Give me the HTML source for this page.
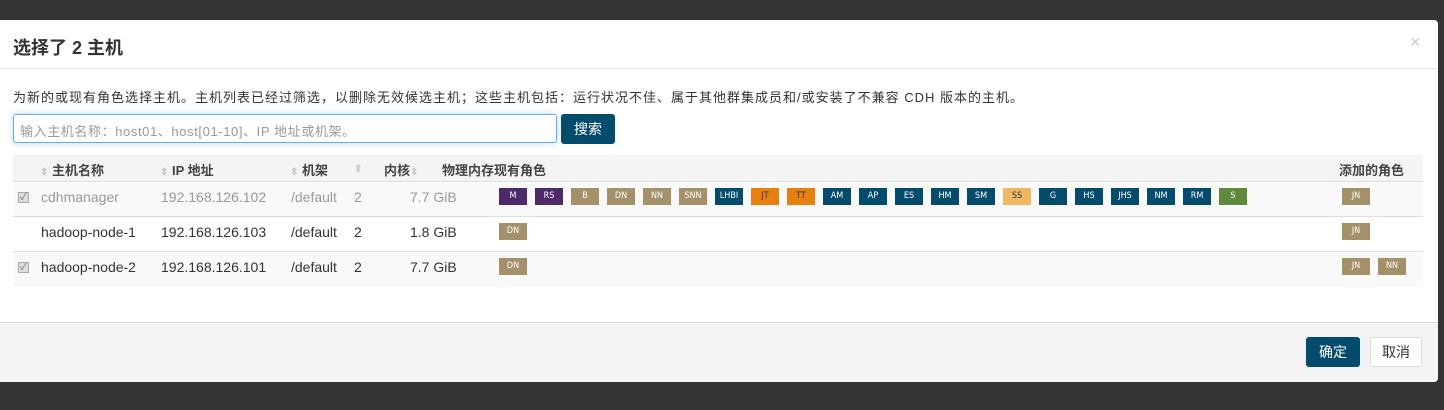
<!DOCTYPE html>
<html><head><meta charset="utf-8"><style>
*{margin:0;padding:0;box-sizing:border-box}
body{width:1444px;height:410px;background:#333;font-family:"Liberation Sans","Noto Sans CJK SC",sans-serif;position:relative;overflow:hidden;color:#333}
.modal{position:absolute;left:0;top:20px;width:1438px;height:362px;background:#fff;border-radius:0 4px 4px 0;overflow:hidden}
.a{position:absolute;white-space:nowrap}
.b{position:absolute;width:28px;height:17px;color:#fff;font-size:9px;line-height:17px;text-align:center;font-family:"DejaVu Sans Condensed","Liberation Sans",sans-serif}
.m{background:#4e2a6b}.t{background:#a4916a}.d{background:#034c6c}.o{background:#e8800f;color:#333}.y{background:#f0b860;color:#333}.g{background:#5e8a3a}
.cb{position:absolute;width:11px;height:11px;border:1px solid #aaa;background:#ddd;font-size:10px;line-height:9px;text-align:center;color:#777}
.sort{color:#ccc;font-size:10px}
</style></head><body>
<div class="modal">
<div class="a" style="left:13px;top:14px;font-size:18px;font-weight:bold;color:#333">选择了 2 主机</div>
<div class="a" style="left:1410px;top:12px;font-size:18px;color:#ccc">×</div>
<div style="position:absolute;left:0;top:48px;width:1438px;height:1px;background:#e5e5e5"></div>
<div class="a" style="left:13px;top:67px;font-size:13px;color:#333;letter-spacing:1px">为新的或现有角色选择主机。主机列表已经过筛选，以删除无效候选主机；这些主机包括：运行状况不佳、属于其他群集成员和/或安装了不兼容 CDH 版本的主机。</div>
<div style="position:absolute;left:13px;top:94px;width:544px;height:29px;border:1px solid #66afe9;border-radius:3px;box-shadow:0 0 6px rgba(102,175,233,.5)"></div>
<div class="a" style="left:20px;top:101px;font-size:13px;color:#999;letter-spacing:0.6px">输入主机名称：host01、host[01-10]、IP 地址或机架。</div>
<div class="a" style="left:561px;top:94px;width:54px;height:30px;background:#034c6c;border-radius:3px;color:#fff;font-size:14px;line-height:30px;text-align:center">搜索</div>

<div style="position:absolute;left:13px;top:135px;width:1410px;height:27px;background:#f4f4f4;border-bottom:1px solid #ddd"></div>
<div style="position:absolute;left:13px;top:163px;width:1410px;height:34px;background:#f9f9f9;border-bottom:1px solid #ddd"></div>
<div style="position:absolute;left:13px;top:198px;width:1410px;height:34px;background:#fff;border-bottom:1px solid #ddd"></div>
<div style="position:absolute;left:13px;top:233px;width:1410px;height:34px;background:#f9f9f9"></div>

<div class="a" style="left:40px;top:140px;font-size:13px;font-weight:bold;color:#444"><span class="sort">⬍</span> 主机名称</div>
<div class="a" style="left:160px;top:140px;font-size:13px;font-weight:bold;color:#444"><span class="sort">⬍</span> IP 地址</div>
<div class="a" style="left:290px;top:140px;font-size:13px;font-weight:bold;color:#444"><span class="sort">⬍</span> 机架</div>
<div class="a" style="left:354px;top:140px;font-size:13px;font-weight:bold;color:#444"><span class="sort">⬍</span></div>
<div class="a" style="left:384px;top:140px;font-size:13px;font-weight:bold;color:#444">内核<span class="sort">⬍</span></div>
<div class="a" style="left:442px;top:140px;font-size:13px;font-weight:bold;color:#444">物理内存现有角色</div>
<div class="a" style="left:1339px;top:140px;font-size:13px;font-weight:bold;color:#444">添加的角色</div>

<div class="cb" style="left:18px;top:172px">✓</div>
<div class="a" style="left:41px;top:169px;font-size:14px;color:#999">cdhmanager</div>
<div class="a" style="left:161px;top:169px;font-size:14px;color:#999">192.168.126.102</div>
<div class="a" style="left:291px;top:169px;font-size:14px;color:#999">/default</div>
<div class="a" style="left:354px;top:169px;font-size:14px;color:#999">2</div>
<div class="a" style="left:410px;top:169px;font-size:14px;color:#999">7.7 GiB</div>

<div class="a" style="left:41px;top:204px;font-size:14px">hadoop-node-1</div>
<div class="a" style="left:161px;top:204px;font-size:14px">192.168.126.103</div>
<div class="a" style="left:291px;top:204px;font-size:14px">/default</div>
<div class="a" style="left:354px;top:204px;font-size:14px">2</div>
<div class="a" style="left:410px;top:204px;font-size:14px">1.8 GiB</div>

<div class="cb" style="left:18px;top:242px">✓</div>
<div class="a" style="left:41px;top:239px;font-size:14px">hadoop-node-2</div>
<div class="a" style="left:161px;top:239px;font-size:14px">192.168.126.101</div>
<div class="a" style="left:291px;top:239px;font-size:14px">/default</div>
<div class="a" style="left:354px;top:239px;font-size:14px">2</div>
<div class="a" style="left:410px;top:239px;font-size:14px">7.7 GiB</div>

<div class="b m" style="left:499px;top:168px">M</div>
<div class="b m" style="left:535px;top:168px">RS</div>
<div class="b t" style="left:571px;top:168px">B</div>
<div class="b t" style="left:607px;top:168px">DN</div>
<div class="b t" style="left:643px;top:168px">NN</div>
<div class="b t" style="left:679px;top:168px">SNN</div>
<div class="b d" style="left:715px;top:168px">LHBI</div>
<div class="b o" style="left:751px;top:168px">JT</div>
<div class="b o" style="left:787px;top:168px">TT</div>
<div class="b d" style="left:823px;top:168px">AM</div>
<div class="b d" style="left:859px;top:168px">AP</div>
<div class="b d" style="left:895px;top:168px">ES</div>
<div class="b d" style="left:931px;top:168px">HM</div>
<div class="b d" style="left:967px;top:168px">SM</div>
<div class="b y" style="left:1003px;top:168px">SS</div>
<div class="b d" style="left:1039px;top:168px">G</div>
<div class="b d" style="left:1075px;top:168px">HS</div>
<div class="b d" style="left:1111px;top:168px">JHS</div>
<div class="b d" style="left:1147px;top:168px">NM</div>
<div class="b d" style="left:1183px;top:168px">RM</div>
<div class="b g" style="left:1219px;top:168px">S</div>
<div class="b t" style="left:1342px;top:168px">JN</div>

<div class="b t" style="left:499px;top:203px">DN</div>
<div class="b t" style="left:1342px;top:203px">JN</div>

<div class="b t" style="left:499px;top:238px">DN</div>
<div class="b t" style="left:1342px;top:238px">JN</div>
<div class="b t" style="left:1378px;top:238px">NN</div>

<div style="position:absolute;left:0;top:302px;width:1438px;height:60px;background:#f3f3f3;border-top:1px solid #ddd"></div>
<div class="a" style="left:1306px;top:317px;width:54px;height:30px;background:#034c6c;border-radius:3px;color:#fff;font-size:14px;line-height:30px;text-align:center">确定</div>
<div class="a" style="left:1370px;top:317px;width:52px;height:30px;background:#fff;border:1px solid #ddd;border-radius:3px;color:#333;font-size:14px;line-height:28px;text-align:center">取消</div>
</div>
</body></html>
